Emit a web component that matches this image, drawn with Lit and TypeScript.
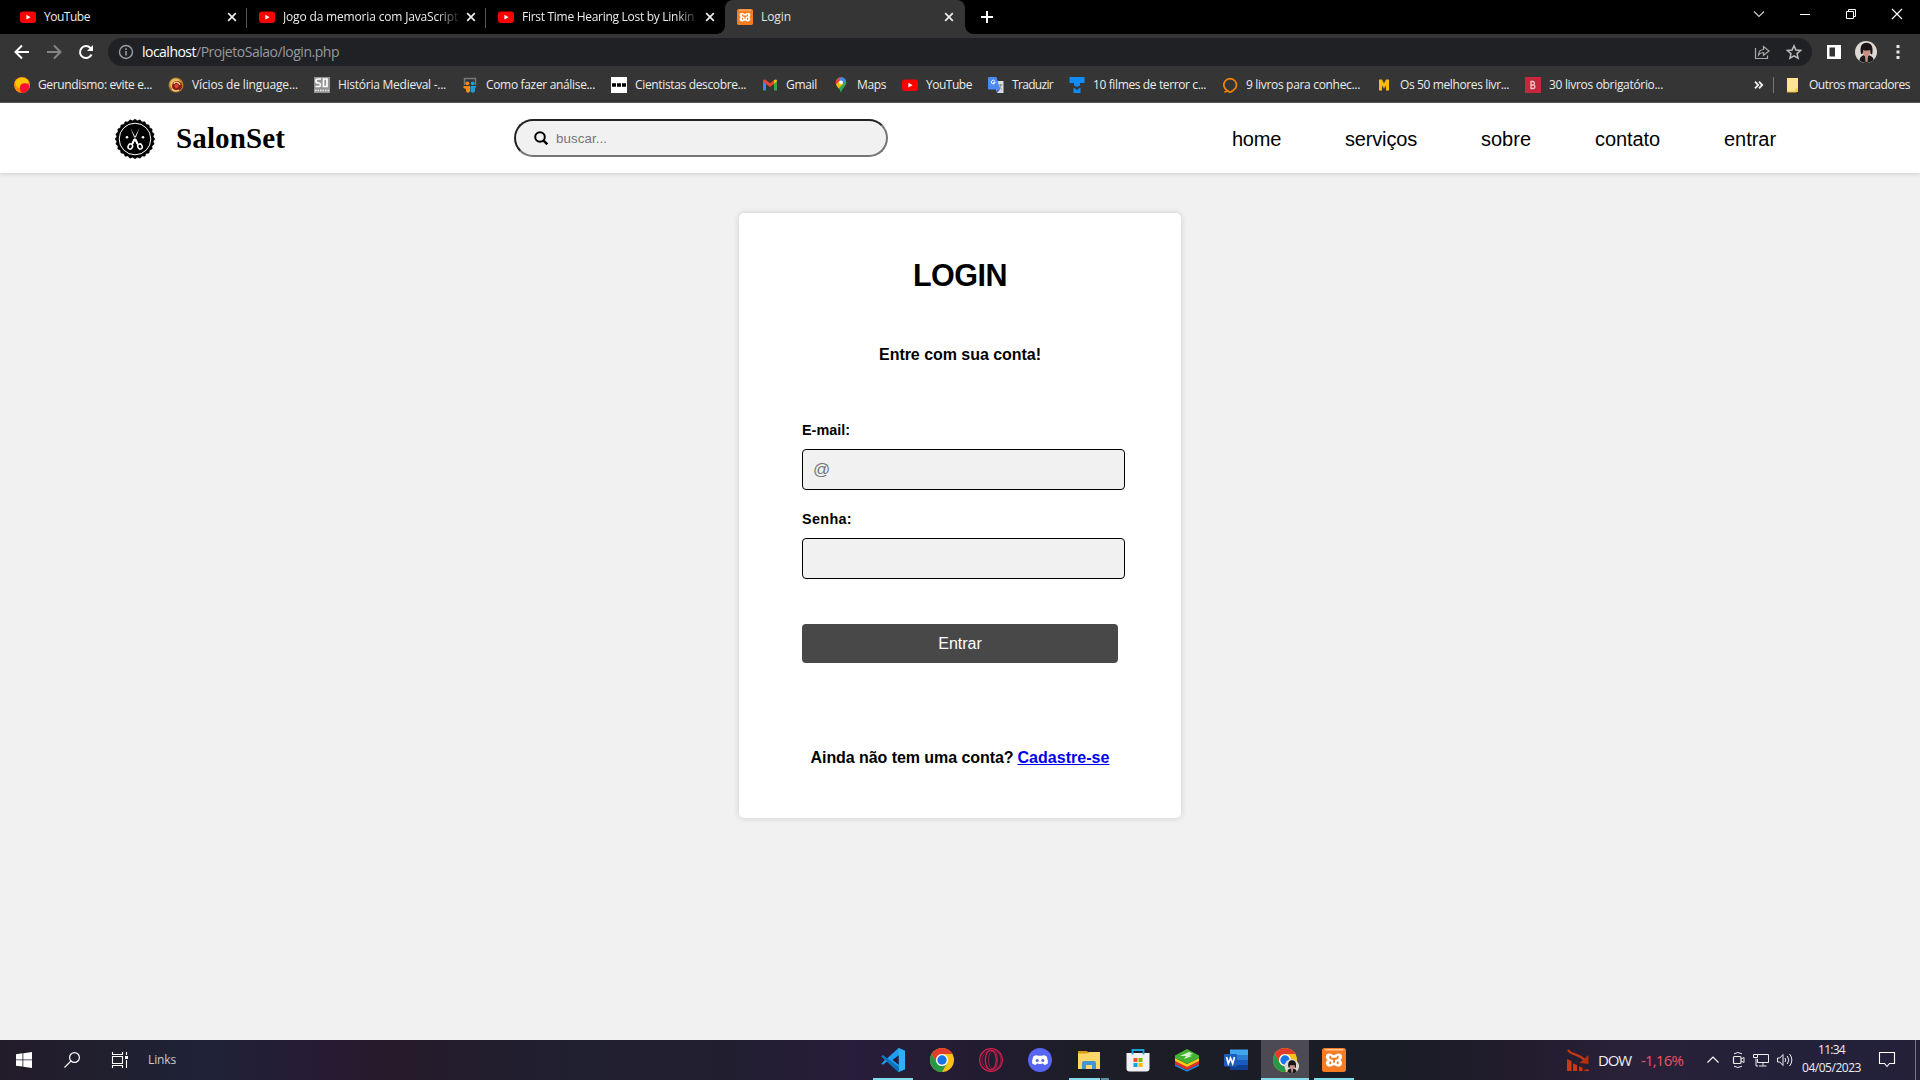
import { LitElement, html, css, svg } from "lit";
import { customElement, property } from "lit/decorators.js";

/* A single line of text whose tracking is adjusted to occupy a given width. */
@customElement("fit-text")
class FitText extends LitElement {
  @property() text = "";
  @property({ type: Number }) w = 0;
  static styles = css`
    :host { display: block; flex: none; white-space: pre; }
    .box { display: block; text-decoration: inherit; }
    .run { display: inline-block; text-decoration: inherit; }
  `;
  firstUpdated() {
    const run = this.renderRoot.querySelector(".run") as HTMLElement;
    const natural = run.getBoundingClientRect().width;
    run.style.letterSpacing = `${(this.w - natural) / this.text.length}px`;
  }
  render() {
    return html`<span class="box" style="width:${this.w}px"><span class="run">${this.text}</span></span>`;
  }
}

const icon = (vb: string, w: number, h: number, body: unknown) =>
  html`<svg viewBox=${vb} width=${w} height=${h} fill="none">${body}</svg>`;

const youtube = svg`<rect x="0" y="2.5" width="16" height="11.5" rx="3" fill="#f00"/><path d="M6.4 5.8v4.8l4.2-2.4z" fill="#fff"/>`;
const xampp = svg`<rect width="24" height="24" rx="2.5" fill="#f57c20"/><rect x="2.5" y="1" width="19" height="1.4" rx=".7" fill="#fbc79b"/>
  <path d="M7.2 5.500c-4 0-4.200 4.700-1.600 6.500-2.800 2-2 6.600 1.800 6.600 2.600 0 2.800-1.400 4.600-1.400s2 1.400 4.600 1.400c3.800 0 4.600-4.600 1.800-6.600 2.600-1.800 2.400-6.500-1.600-6.500-2.600 0-3 1.600-4.800 1.600s-2.200-1.600-4.800-1.600z" fill="#fff"/>
  <path d="M8.300 8.700v.5c0 1 .8 1.500 2 1.500h3.400c1.200 0 2-.5 2-1.500v-.5M8.300 15.300v-1.200M15.700 15.300v-1.200M12 10.700v3.300" stroke="#f57c20" stroke-width="1.900" stroke-linecap="round"/>`;
const chrome = svg`<circle cx="12" cy="12" r="12" fill="#fbc116"/>
  <path d="M1.600 6A12 12 0 0 1 22.400 6H12a6 6 0 0 0-5.200 9z" fill="#e33b2e"/>
  <path d="M1.600 6A12 12 0 0 0 12 24l5.200-9A6 6 0 0 1 6.800 15z" fill="#279847"/>
  <circle cx="12" cy="12" r="6" fill="#fff"/><circle cx="12" cy="12" r="4.700" fill="#1a73e8"/>`;
const avatar = svg`<circle cx="11" cy="11" r="11" fill="#ded8d4"/><path d="M4.500 19.800c0-4 3-5.800 6.500-5.800s7 1 7.600 4.900A11 11 0 0 1 4.500 19.800z" fill="#1a191c"/><ellipse cx="11.500" cy="11" rx="3.400" ry="5" fill="#c98f83"/><path d="M6 13C4.500 5 7 1.800 11.500 1.800S18.500 5 17.300 13c-1.600 1-2.100 0-2.100-4-2 .7-5 .7-7 0 0 3-.4 4.500-2.200 4z" fill="#1c1518"/><path d="M10 15h3l-.5 6h-2z" fill="#c98f83"/>`;

const tabs = [
  { title: "YouTube", w: 46, fade: false },
  { title: "Jogo da memoria com JavaScript", w: 175, fade: true },
  { title: "First Time Hearing Lost by Linkin", w: 172, fade: true },
];

const bookmarks = [
  { t: "Gerundismo: evite e...", w: 114, i: svg`<circle cx="8" cy="8" r="8" fill="#ff8a00"/><path d="M1 5a8 8 0 0 1 14 0c-2 3-7 1-9 5-1 2-4 1-5-5z" fill="#ffc400"/><path d="M6 10c0-4 6-5 9-2 1 4-2 8-7 8-2-1-2-4-2-6z" fill="#ff1030"/>` },
  { t: "Vícios de linguage...", w: 106, i: svg`<circle cx="8" cy="8" r="7.500" fill="#b57c2a"/><circle cx="7.500" cy="7" r="5.500" fill="#e8bc62"/><circle cx="9" cy="9" r="5" fill="#8f1c16"/><path d="M6 7c1-3 5-2 6 1M4 12c2 2 5 2 7 1" stroke="#f3d58c" stroke-width="1.300"/><circle cx="8.500" cy="9" r="2" fill="#d94d2b"/>` },
  { t: "História Medieval -...", w: 108, i: svg`<rect width="16" height="16" fill="#949494"/><path d="M7 2H3.500Q2 2 2 4t2 2h1q1.500 0 1.500 1.700T5 9.500H1.500M9.500 2h3.500v7.500H9.500z" stroke="#fff" stroke-width="1.700"/><path d="M1 13.500h14" stroke="#eee" stroke-width="1.500" stroke-dasharray="1.500 1"/>` },
  { t: "Como fazer análise...", w: 109, i: svg`<path d="M2.500 8V1.500h11V8" stroke="#777" stroke-width="1.500"/><circle cx="5.300" cy="6.300" r="1.900" fill="#f58a1f"/><circle cx="10.700" cy="6.300" r="1.900" fill="#169ed8"/><path d="M1.500 9H8v5.500L6 16l-2-1.500V12l-2.500-1z" fill="#f58a1f"/><path d="M14.500 9L13 11.500v3L10.500 16l-2-1.500V9z" fill="#169ed8"/>` },
  { t: "Cientistas descobre...", w: 111, i: svg`<rect width="16" height="16" fill="#fff"/><path d="M1 6.300h4v3.500H1zM6 6.300h4v3.500H6zM11 6.300h4v3.500h-4z" fill="#000"/>` },
  { t: "Gmail", w: 31, i: svg`<path d="M1 13.500V3.500l3 2v8z" fill="#4285f4"/><path d="M12 13.500v-8l3-2v10z" fill="#34a853"/><path d="M1 5V4c0-1.700 1.500-2 2.500-1.200L8 6.300l4.500-3.500L12 7 8 10 4 7z" fill="#ea4335"/><path d="M12 7V3.200c1.500-1.200 3-.4 3 1z" fill="#fbbc04"/>` },
  { t: "Maps", w: 29, i: svg`<path d="M8 .3c3 0 5.300 2.300 5.300 5.200C13.300 9.500 9 11 8 16 7 11 2.700 9.500 2.700 5.500 2.700 2.600 5 .3 8 .3z" fill="#34a853"/><path d="M3.500 3A5.300 5.300 0 0 1 9.500.5L6 5 3 7.500C2.600 6 2.700 4 3.500 3z" fill="#ea4335"/><path d="M8 .3c2 0 4 1.200 4.800 3L9.500 7 6 3z" fill="#4285f4"/><path d="M3 7.500L6.500 4 10 7l-4.500 4.500z" fill="#fbbc04"/><circle cx="8" cy="5.400" r="1.900" fill="#fff"/>` },
  { t: "YouTube", w: 46, i: youtube },
  { t: "Traduzir", w: 41, i: svg`<path d="M6 4h9.500v12H9z" fill="#d9dce0"/><path d="M0 1q0-1 1-1h7.500l3.500 12.500H1q-1 0-1-1z" fill="#4a8af4"/><path d="M7.600 5.300H5.500v1.200h1A1.900 1.900 0 1 1 6.800 4" stroke="#fff" stroke-width="1"/><path d="M10.500 8h4M12.500 7v1c0 2-1 4-2 5M11 9.500c1 1.500 2 2.500 3 3" stroke="#788088" stroke-width=".9"/><path d="M8.500 12.500H12L9 16z" fill="#3367d6"/>` },
  { t: "10 filmes de terror c...", w: 113, i: svg`<path d="M.5 0h15v6h-4.500v2.500L8 10 5 8.500V6H.5z" fill="#118cff"/><path d="M4.500 10.500L8 13l3.500-2.500V16h-7z" fill="#118cff"/>` },
  { t: "9 livros para conhec...", w: 114, i: svg`<path d="M5.300 13.700L2.500 15.200M5.300 13.500A6.300 6.300 0 1 1 11 13.500L8 15.500z" stroke="#f58400" stroke-width="1.700"/>` },
  { t: "Os 50 melhores livr...", w: 109, i: svg`<path d="M3 13.500v-11h3l2 4 2-4h3v11h-3v-5l-2 3-2-3v5z" fill="#fdbb11"/>` },
  { t: "30 livros obrigatório...", w: 114, i: svg`<rect width="16" height="16" fill="#c5283d"/><path d="M6 4.500v7h2.300c2.200 0 2.200-3.500 0-3.500H6h2c1.900 0 1.900-3.500 0-3.500z" stroke="#f2c5ca" stroke-width="1.300"/>` },
];

@customElement("browser-chrome")
class BrowserChrome extends LitElement {
  static styles = css`
    :host { display: block; font: 12px/16px "Open Sans", "Noto Sans", sans-serif; color: #ececec; background: #353535; height: 102px; border-bottom: 1px solid #606060; }
    svg { display: block; flex: none; }
    .strip { display: flex; height: 34px; background: #000; padding-left: 8px; }
    .tab { display: flex; align-items: center; width: 239px; height: 34px; box-sizing: border-box; padding: 0 9px 0 12px; gap: 8px; border-image: linear-gradient(#0000 24%, #555 24%, #555 80%, #0000 80%) 1; border-style: solid; border-width: 0 1px 0 0; }
    .tab.last { border: 0; padding-right: 10px; }
    .title { flex: 1; overflow: hidden; }
    .fade { -webkit-mask-image: linear-gradient(90deg, #000 153px, #0002 175px); }
    .active { position: relative; width: 240px; background: #353535; border: 0; border-radius: 8px 8px 0 0; padding-right: 11px; color: #e4e4e4; }
    .active::before, .active::after { content: ""; position: absolute; bottom: 0; width: 8px; height: 8px; }
    .active::before { left: -8px; background: radial-gradient(circle at 0 0, #0000 7.500px, #353535 8px); }
    .active::after { right: -8px; background: radial-gradient(circle at 100% 0, #0000 7.500px, #353535 8px); }
    .plus { padding: 11px 0 0 16px; }
    .controls { display: flex; margin-left: auto; gap: 30px; padding: 6px 15px 0 0; }
    .bar { display: flex; align-items: center; height: 36px; }
    .navs { display: flex; width: 108px; gap: 16px; box-sizing: border-box; padding-left: 14px; }
    .omni { display: flex; align-items: center; width: 1704px; height: 28px; box-sizing: border-box; border-radius: 14px; background: #202124; padding: 0 10px; font-size: 14px; line-height: 20px; }
    .omni .host { margin-left: 8px; color: #fff; }
    .path { color: #969a9d; }
    .share { margin-left: auto; margin-right: 16px; }
    .side { display: flex; align-items: center; gap: 14px; padding-left: 15px; }
    .marks { display: flex; align-items: center; height: 29px; padding: 0 10px 0 14px; gap: 16px; }
    .mark { display: flex; align-items: center; gap: 8px; }
    .more { display: flex; align-items: center; margin-left: auto; }
    .div { width: 1px; height: 16px; background: #777; margin: 0 11px 0 9px; }
    .other { margin-left: 8px; }
  `;
  close() {
    return icon("0 0 10 10", 10, 10, svg`<path d="M1.200 1.200l7.600 7.600M8.800 1.200L1.200 8.800" stroke="#eee" stroke-width="1.700"/>`);
  }
  render() {
    return html`
      <div class="strip">
        ${tabs.map((t, i) => html`<div class="tab ${i === 2 ? "last" : ""}">
          ${icon("0 0 16 16", 16, 16, youtube)}
          <div class="title ${t.fade ? "fade" : ""}"><fit-text .text=${t.title} .w=${t.w}></fit-text></div>${this.close()}
        </div>`)}
        <div class="tab active">${icon("0 0 24 24", 16, 16, xampp)}<div class="title"><fit-text .text=${"Login"} .w=${30}></fit-text></div>${this.close()}</div>
        <div class="plus">${icon("0 0 12 12", 12, 12, svg`<path d="M6 0v12M0 6h12" stroke="#fff" stroke-width="2"/>`)}</div>
        <div class="controls">
          ${icon("0 0 16 16", 16, 16, svg`<path d="M3 5.500l5 5 5-5" stroke="#ccc" stroke-width="1.200"/>`)}
          ${icon("0 0 16 16", 16, 16, svg`<path d="M3 8.500h10" stroke="#fff"/>`)}
          ${icon("0 0 16 16", 16, 16, svg`<path d="M3.500 5.500h7v7h-7zM5.500 5.500v-2h7v7h-2" stroke="#fff"/>`)}
          ${icon("0 0 16 16", 16, 16, svg`<path d="M3 3l10 10M13 3L3 13" stroke="#fff" stroke-width="1.200"/>`)}
        </div>
      </div>
      <div class="bar">
        <div class="navs">
          ${icon("0 0 16 16", 16, 16, svg`<path d="M15 8H2M8 1.500L1.500 8 8 14.500" stroke="#fff" stroke-width="2"/>`)}
          ${icon("0 0 16 16", 16, 16, svg`<path d="M1 8h13M8 1.500L14.500 8 8 14.500" stroke="#858585" stroke-width="2"/>`)}
          ${icon("0 0 16 16", 16, 16, svg`<path d="M13.500 10.500A6 6 0 1 1 12.400 4L14 5.700" stroke="#fff" stroke-width="2"/><path d="M15 1v6H9z" fill="#fff"/>`)}
        </div>
        <div class="omni">
          ${icon("0 0 16 16", 16, 16, svg`<circle cx="8" cy="8" r="6.500" stroke="#9aa0a6" stroke-width="1.400"/><path d="M8 7v4.500M8 4.300V6" stroke="#9aa0a6" stroke-width="1.500"/>`)}
          <fit-text class="host" .text=${"localhost"} .w=${54}></fit-text><fit-text class="path" .text=${"/ProjetoSalao/login.php"} .w=${143}></fit-text>
          <div class="share">${icon("0 0 16 16", 16, 16, svg`<path d="M1.500 4v10.500h12v-3" stroke="#aaa" stroke-width="1.200"/><path d="M4.500 11c.3-4 2-5.500 5-5.500V2.500l5.500 4.500-5.500 4.300V8.500c-2.500 0-3.500.5-5 2.500z" stroke="#aaa" stroke-width="1.200"/>`)}</div>
          ${icon("0 0 16 16", 16, 16, svg`<path d="M8 1.800l1.900 4.300 4.700.4-3.600 3.100 1.100 4.600L8 11.800l-4.100 2.400L5 9.600 1.400 6.500l4.700-.4z" stroke="#bbb" stroke-width="1.500"/>`)}
        </div>
        <div class="side">
          ${icon("0 0 14 14", 14, 14, svg`<path d="M0 0h14v14H0zM2.500 2.500v9H8v-9z" fill="#fff" fill-rule="evenodd"/>`)}
          ${icon("0 0 22 22", 22, 22, avatar)}
          ${icon("0 0 14 14", 14, 14, svg`<path d="M5.500 0h3v3h-3zM5.500 5.500h3v3h-3zM5.500 11h3v3h-3z" fill="#e8e8e8"/>`)}
        </div>
      </div>
      <div class="marks">
        ${bookmarks.map((b) => html`<div class="mark">${icon("0 0 16 16", 16, 16, b.i)}<fit-text .text=${b.t} .w=${b.w}></fit-text></div>`)}
        <div class="more">
          ${icon("0 0 10 8", 10, 8, svg`<path d="M1 .7L4.200 4 1 7.300M5 .7L8.200 4 5 7.300" stroke="#eee" stroke-width="1.800"/>`)}
          <div class="div"></div>
          ${icon("0 0 16 16", 16, 16, svg`<path d="M2 1h11v11l-2 3H2z" fill="#ffe592"/><path d="M10.500 15v-3.500H13V15z" fill="#f6c945"/><path d="M2 15h9.500" stroke="#e6b93c"/>`)}
          <fit-text class="other" .text=${"Outros marcadores"} .w=${101}></fit-text>
        </div>
      </div>`;
  }
}

const sealPath = (() => {
  const n = 24;
  let d = "";
  for (let i = 0; i <= n * 2; i++) {
    const a = (i * Math.PI) / n;
    const r = i % 2 ? 18.3 : 19.8;
    d += `${i ? "L" : "M"}${(20 + r * Math.cos(a)).toFixed(2)} ${(20 + r * Math.sin(a)).toFixed(2)}`;
  }
  return d + "z";
})();

const links = [
  { t: "home", w: 49 }, { t: "serviços", w: 72 }, { t: "sobre", w: 50 }, { t: "contato", w: 65 }, { t: "entrar", w: 52 },
];

@customElement("salon-page")
class SalonPage extends LitElement {
  static styles = css`
    :host { display: block; height: 937px; background: #f1f1f1; color: #000; font-family: "Liberation Sans", Arial, sans-serif; }
    svg { display: block; flex: none; }
    header { display: flex; align-items: center; height: 70px; background: #fff; box-shadow: 0 0 5px rgba(0,0,0,.22); padding-left: 115px; }
    .seal { padding-top: 2px; }
    .brand { font: bold 29px/34px "Liberation Serif", "Times New Roman", serif; margin-left: 21px; }
    .search { display: flex; align-items: center; width: 374px; height: 38px; box-sizing: border-box; margin-left: 229px; border: 2px solid; border-color: #222 #767676 #767676 #222; border-radius: 20px; background: #f1f1f1; padding-left: 18px; color: #757575; font-size: 13.330px; }
    .ph { margin-left: 8px; }
    nav { display: flex; gap: 64px; margin-left: 344px; font-size: 20px; line-height: 24px; padding-top: 1px; }
    .card { width: 442px; height: 605px; box-sizing: border-box; margin: 40px auto 0; background: #fff; border-radius: 5px; box-shadow: 0 0 6px rgba(0,0,0,.15); padding: 44px 56px 0 63px; }
    h1 { font-size: 30.500px; line-height: 36px; margin: 0; display: flex; justify-content: center; padding-right: 7px; }
    .sub, .foot { font-size: 16px; line-height: 20px; font-weight: bold; display: flex; justify-content: center; padding-right: 7px; }
    .sub { margin-top: 52px; }
    .label { font: bold 14.400px/18px "Liberation Sans", Arial, sans-serif; margin: 56px 0 10px; }
    .label.two { margin: 20px 0 10px; }
    .input { width: 323px; height: 41px; box-sizing: border-box; border: 1px solid #000; border-radius: 4px; background: #f1f1f1; color: #757575; font-size: 17px; line-height: 40px; padding-left: 10px; }
    .btn { display: block; width: 316px; height: 39px; margin-top: 45px; padding: 0; border: 0; border-radius: 4px; background: #484848; color: #fff; font: 16px/39px "Liberation Sans", Arial, sans-serif; }
    .foot { margin-top: 85px; }
    .foot a { color: #00e; text-decoration: underline; margin-left: 4px; }
    .foot a fit-text { text-decoration: inherit; }
  `;
  render() {
    return html`
      <header>
        <div class="seal">${icon("0 0 40 40", 40, 40, svg`<path d=${sealPath} fill="#000" stroke="#000" stroke-width=".6" stroke-linejoin="round"/>
          <circle cx="20" cy="20" r="15.800" stroke="#fff" stroke-width="1"/>
          <path d="M15.500 9l7.800 15-1.600 1.200zM24.500 9l-7.800 15 1.600 1.200z" fill="#fff"/>
          <path d="M18.600 20h2.400l2.500 5-1.500.7-2.200-4-2.200 4-1.500-.7z" fill="#fff"/>
          <ellipse cx="15.300" cy="27.500" rx="2.200" ry="2.600" transform="rotate(25 15.300 27.500)" stroke="#fff" stroke-width="1.500"/><ellipse cx="25" cy="27.500" rx="2.200" ry="2.600" transform="rotate(-25 25 27.500)" stroke="#fff" stroke-width="1.500"/>
          <circle cx="12" cy="18.200" r="1.300" fill="#fff"/><circle cx="28" cy="18.200" r="1.300" fill="#fff"/>`)}</div>
        <fit-text class="brand" .text=${"SalonSet"} .w=${109}></fit-text>
        <div class="search">
          ${icon("0 0 14 14", 14, 14, svg`<circle cx="6" cy="6" r="4.800" stroke="#000" stroke-width="2"/><path d="M9.300 9.300l4 4" stroke="#000" stroke-width="2.400"/>`)}
          <fit-text class="ph" .text=${"buscar..."} .w=${51}></fit-text>
        </div>
        <nav>${links.map((l) => html`<fit-text .text=${l.t} .w=${l.w}></fit-text>`)}</nav>
      </header>
      <div class="card">
        <h1><fit-text .text=${"LOGIN"} .w=${94}></fit-text></h1>
        <div class="sub"><fit-text .text=${"Entre com sua conta!"} .w=${162}></fit-text></div>
        <div class="label"><fit-text .text=${"E-mail:"} .w=${48}></fit-text></div>
        <div class="input">@</div>
        <div class="label two"><fit-text .text=${"Senha:"} .w=${50}></fit-text></div>
        <div class="input"></div>
        <button class="btn">Entrar</button>
        <div class="foot"><fit-text .text=${"Ainda não tem uma conta?"} .w=${203}></fit-text><a><fit-text .text=${"Cadastre-se"} .w=${92}></fit-text></a></div>
      </div>`;
  }
}

const apps = [
  { k: "short", i: svg`<path d="M17.500 0L24 2.800v18.400L17.500 24 6 13.500 2 16.800.3 15.700 4 12 .3 8.300 2 7.200l4 3.300zM18 7l-6.500 5 6.500 5z" fill="#1f9cf0" fill-rule="evenodd"/><path d="M.3 8.300L2 7.200 18 19v4.500l-.5.500z" fill="#0a72bd"/><path d="M17.500 0L24 2.800v18.400L17.500 24 18 23z" fill="#2fb0f4"/>` },
  { k: "", i: chrome },
  { k: "", i: svg`<circle cx="12" cy="12" r="11.300" stroke="#d9214e" stroke-width="1.200"/><circle cx="12.500" cy="12" r="9.500" stroke="#a91b45" stroke-width=".8"/><ellipse cx="11.800" cy="12" rx="5.500" ry="10" stroke="#d9214e" stroke-width="1.200"/><ellipse cx="14" cy="12" rx="4.500" ry="9" stroke="#b51c48" stroke-width=".9"/>` },
  { k: "", i: svg`<circle cx="12" cy="12" r="12" fill="#5865f2"/><path d="M8.500 7.200L10 7.800h4l1.500-.6c1.600.2 2.500.7 3 1.100 1 2 1.600 5 1.300 7.300-1 .9-2.200 1.400-3.500 1.500l-1-1.500c-2 .5-4.600.5-6.600 0l-1 1.500c-1.300-.1-2.500-.6-3.500-1.500-.3-2.300.3-5.300 1.300-7.300.5-.4 1.400-.9 3-1.100z" fill="#fff"/><circle cx="9.200" cy="12.400" r="1.500" fill="#5865f2"/><circle cx="14.800" cy="12.400" r="1.500" fill="#5865f2"/>` },
  { k: "split", i: svg`<path d="M1 3h9l2 2h11v4H1z" fill="#dc9b12"/><path d="M1 5.500h9L12 4h11v17H1z" fill="#ffd768"/><path d="M5 21v-6q0-2 2-2h10q2 0 2 2v6h-4v-4H9v4z" fill="#3f95d8"/>` },
  { k: "", i: svg`<path d="M.5 5h23v15.500q0 3-3 3h-17q-3 0-3-3z" fill="#f1f1f3"/><path d="M6.500 6.500V2h11v4.500" stroke="#16a5e2" stroke-width="1.800"/><path d="M7.500 10H11.500v4H7.500z" fill="#f25022"/><path d="M12.500 10h4v4h-4z" fill="#7fba00"/><path d="M7.500 15h4v4h-4z" fill="#00a4ef"/><path d="M12.500 15h4v4h-4z" fill="#ffb900"/>` },
  { k: "", i: svg`<path d="M0 16l12 6 12-6v2l-12 5.700L0 18z" fill="#1688d8"/><path d="M0 13l12 6 12-6v3l-12 6-12-6z" fill="#e62d2d"/><path d="M0 10l12 6 12-6v3l-12 6-12-6z" fill="#ffcb16"/><path d="M0 7.500L12 1l12 6.500V10l-12 6-12-6z" fill="#43b430"/><path d="M5 8l9-4 4 2-4 1 3 1-8 3 2-3z" fill="#d9f2d0"/>` },
  { k: "", i: svg`<path d="M6 1.500h18v6H6z" fill="#41a5ee"/><path d="M6 7h18v5.500H6z" fill="#2b7cd3"/><path d="M6 12h18v5.500H6z" fill="#185abd"/><path d="M6 17h18v5H6z" fill="#103f91"/><rect y="6" width="13" height="12.500" rx="1" fill="#1b5cbe"/><path d="M2.500 9l1.800 6.500L6.500 10l2.200 5.500L10.500 9" stroke="#fff" stroke-width="1.700"/>` },
  { k: "on", i: svg`${chrome}<g transform="translate(11.500 11) scale(.66)">${avatar}</g>` },
  { k: "short", i: xampp },
];

@customElement("task-bar")
class TaskBar extends LitElement {
  static styles = css`
    :host { display: flex; height: 40px; overflow: hidden; font: 12px/16px "Open Sans", "Noto Sans", sans-serif; color: #eee;
      background: linear-gradient(90deg, #221b2a 0, #20202f 120px, #1f2338 205px, #261b34 310px, #251b2a 400px, #201f30 560px, #211e2f 720px, #281d3b 850px, #221c30 980px, #1c1d27 1090px, #1a1c26 1400px, #231c2e 1530px, #292138 1620px, #23213a 1780px, #24203a 100%); }
    svg { display: block; flex: none; overflow: visible; }
    .left { display: flex; align-items: center; gap: 32px; padding-left: 16px; width: 857px; box-sizing: border-box; }
    .links { margin-left: -12px; color: #ccc; }
    .apps { display: flex; gap: 1px; margin-left: 12px; }
    .app { display: flex; align-items: center; justify-content: center; width: 48px; height: 40px; box-sizing: border-box; background-repeat: no-repeat; background-position: 50% 100%; }
    .short { background-image: linear-gradient(#83dcec, #83dcec); background-size: 40px 2px; }
    .split { background-image: linear-gradient(90deg, #83dcec 31px, #22242e 31px, #22242e 32px, #5d909c 32px); background-size: 40px 2px; }
    .on { background-color: #4c4b54; background-image: linear-gradient(#83dcec, #83dcec); background-size: 48px 2px; }
    .stock { display: flex; align-items: center; margin-left: 209px; font-size: 15px; line-height: 20px; width: 140px; padding-bottom: 1px; }
    .dow { margin-left: 9px; }
    .pct { margin-left: 10px; color: #f0525f; }
    .tray { display: flex; align-items: center; gap: 8px; }
    .meet { margin-left: 4px; }
    .clock { margin-left: 9px; display: flex; flex-direction: column; align-items: center; gap: 2px; padding-top: 2px; }
    .note { margin: 12px 0 0 18px; }
    .peek { width: 1px; height: 40px; background: #777587; margin-left: 20px; }
  `;
  render() {
    return html`
      <div class="left">
        ${icon("0 0 16 16", 16, 16, svg`<path d="M0 2.200l6.500-.9v6.200H0zM7.300 1.200L16 0v7.500H7.300zM0 8.300h6.500v6.300L0 13.700zM7.300 8.300H16V16l-8.700-1.200z" fill="#fff"/>`)}
        ${icon("0 0 16 16", 16, 16, svg`<circle cx="10.500" cy="5.500" r="4.900" stroke="#fff" stroke-width="1.200"/><path d="M7 9L.5 15.500" stroke="#fff" stroke-width="1.300"/>`)}
        ${icon("0 0 16 16", 16, 16, svg`<path d="M.5 0v2.500h10V0M.5 16v-2.500h10V16M.5 4.500h10v7H.5zM14.500 0v3M14.500 8v8" stroke="#fff" stroke-width="1.100"/><path d="M13 4h3v3h-3z" fill="#fff"/>`)}
        <fit-text class="links" .text=${"Links"} .w=${28}></fit-text>
      </div>
      <div class="apps">${apps.map((a) => html`<div class="app ${a.k}">${icon("0 0 24 24", 24, 24, a.i)}</div>`)}</div>
      <div class="stock">
        ${icon("0 0 22 22", 22, 22, svg`<path d="M1 1c4 6 9 2 18 11" stroke="#d13a10" stroke-width="2"/><path d="M21.500 6v9l-9-1z" fill="#b5300c"/><path d="M0 10l4.500 2v10H0zM6 14.500l4 1.500v6H6zM12 17.500l3.500 1V22H12zM17.500 20.500h4.500V22h-4.500z" fill="#cf380f"/>`)}
        <fit-text class="dow" .text=${"DOW"} .w=${33}></fit-text><fit-text class="pct" .text=${"-1,16%"} .w=${42}></fit-text>
      </div>
      <div class="tray">
        ${icon("0 0 12 16", 12, 16, svg`<path d="M.5 10.500L6 5l5.500 5.500" stroke="#fff" stroke-width="1.200"/>`)}
        <div class="meet">${icon("-2 0 14 16", 14, 16, svg`<path d="M1 1.800Q5 -.8 9 1.800M1 14.200q4 2.600 8 0" stroke="#eee"/><rect x=".5" y="4.500" width="7.500" height="7" rx="1" stroke="#eee" stroke-width="1.200"/><path d="M8 7l3-1.500v5L8 9" stroke="#eee"/>`)}</div>
        ${icon("0 0 16 16", 16, 16, svg`<path d="M4.500 2.500h11v8h-11V7M10 10.500v3M6 14h7.500M3 6.500V14h2" stroke="#eee"/><path d="M.5 2.500h4v3h-4z" stroke="#eee"/>`)}
        ${icon("0 0 16 16", 16, 16, svg`<path d="M.5 6h2.300L6 2.500v11L2.800 10H.5z" stroke="#eee"/><path d="M8 6q1.500 2 0 4M10.300 4q3 4 0 8M12.600 2q4.500 6 0 12" stroke="#eee"/>`)}
      </div>
      <div class="clock"><fit-text .text=${"11:34"} .w=${27}></fit-text><fit-text .text=${"04/05/2023"} .w=${59}></fit-text></div>
      <div class="note">${icon("0 0 16 16", 16, 16, svg`<path d="M.5.500h15v11h-5l-2.500 3-2.500-3h-5z" stroke="#fff" stroke-width="1.100"/>`)}</div>
      <div class="peek"></div>`;
  }
}

@customElement("app-root")
class AppRoot extends LitElement {
  static styles = css`
    :host { display: flex; flex-direction: column; width: 1920px; height: 1080px; overflow: hidden; }
  `;
  render() {
    return html`<browser-chrome></browser-chrome><salon-page></salon-page><task-bar></task-bar>`;
  }
}
